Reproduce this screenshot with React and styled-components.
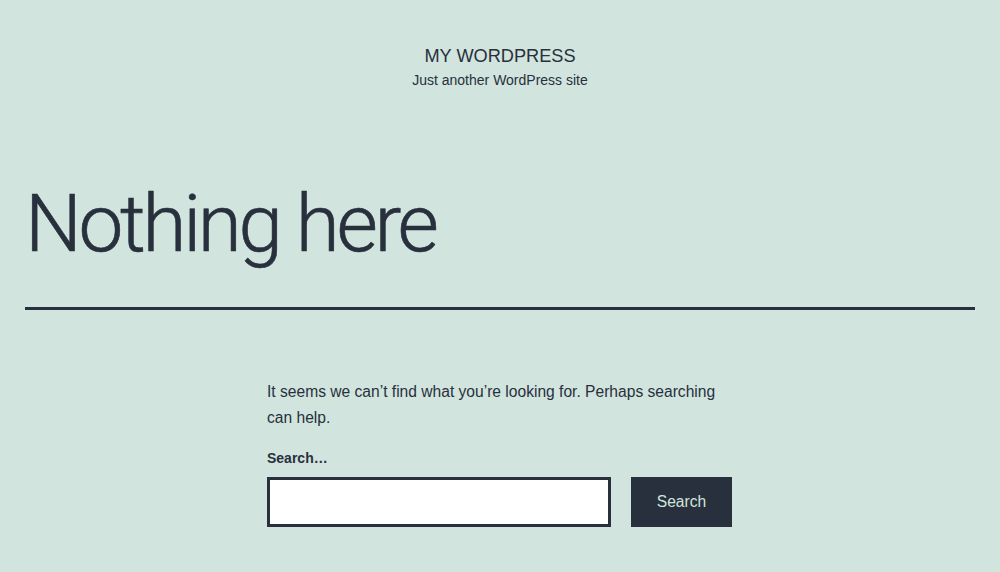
import React from "react";
import styled, { createGlobalStyle } from "styled-components";

const Global = createGlobalStyle`
  html, body { margin: 0; padding: 0; }
  body {
    background: #d1e4dd;
    color: #28303d;
    font-family: "Liberation Sans", Arial, sans-serif;
  }
`;

const Page = styled.div`
  min-height: 572px;
  background: #d1e4dd;
  display: flex;
  flex-direction: column;
`;

const Header = styled.header`
  padding-top: 44px;
  display: flex;
  flex-direction: column;
  align-items: center;
`;

const SiteTitle = styled.div`
  font-size: 18.2px;
  line-height: 24px;
  text-transform: uppercase;
  color: #28303d;
`;

const Tagline = styled.div`
  margin-top: 2px;
  font-size: 14px;
  line-height: 20px;
  color: #28303d;
`;

const PageHeader = styled.div`
  margin: 86px 25px 0;
  border-bottom: 3px solid #28303d;
  padding-bottom: 35px;
`;

const Title = styled.h1`
  margin: 0;
  font-family: Roboto, "Liberation Sans", sans-serif;
  font-weight: 300;
  font-size: 80px;
  line-height: 96px;
  letter-spacing: -3.3px;
  -webkit-text-stroke: 0.6px #28303d;
  color: #28303d;
`;

const Content = styled.main`
  width: 466px;
  margin: 69px auto 0;
`;

const Text = styled.p`
  margin: 0;
  font-size: 15.6px;
  line-height: 26px;
`;

const Form = styled.form`
  margin-top: 17px;
  display: flex;
  flex-direction: column;
`;

const Label = styled.label`
  font-size: 14px;
  font-weight: 700;
  line-height: 20px;
`;

const Row = styled.div`
  margin-top: 9px;
  display: flex;
  gap: 20px;
`;

const Input = styled.input`
  box-sizing: border-box;
  width: 344px;
  height: 50px;
  border: 3px solid #28303d;
  background: #fff;
  border-radius: 0;
  outline: none;
  padding: 0 10px;
  font-family: inherit;
  font-size: 15.6px;
`;

const Button = styled.button`
  box-sizing: border-box;
  width: 101px;
  height: 50px;
  border: none;
  border-radius: 0;
  background: #28303d;
  color: #d1e4dd;
  font-family: "Liberation Sans", Arial, sans-serif;
  font-size: 15.6px;
  cursor: pointer;
`;

export default function App() {
  return (
    <>
      <Global />
      <Page>
        <Header>
          <SiteTitle>My WordPress</SiteTitle>
          <Tagline>Just another WordPress site</Tagline>
        </Header>
        <PageHeader>
          <Title>Nothing here</Title>
        </PageHeader>
        <Content>
          <Text>
            It seems we can’t find what you’re looking for. Perhaps searching
            can help.
          </Text>
          <Form onSubmit={(e) => e.preventDefault()}>
            <Label htmlFor="s">Search…</Label>
            <Row>
              <Input id="s" type="search" />
              <Button type="submit">Search</Button>
            </Row>
          </Form>
        </Content>
      </Page>
    </>
  );
}
